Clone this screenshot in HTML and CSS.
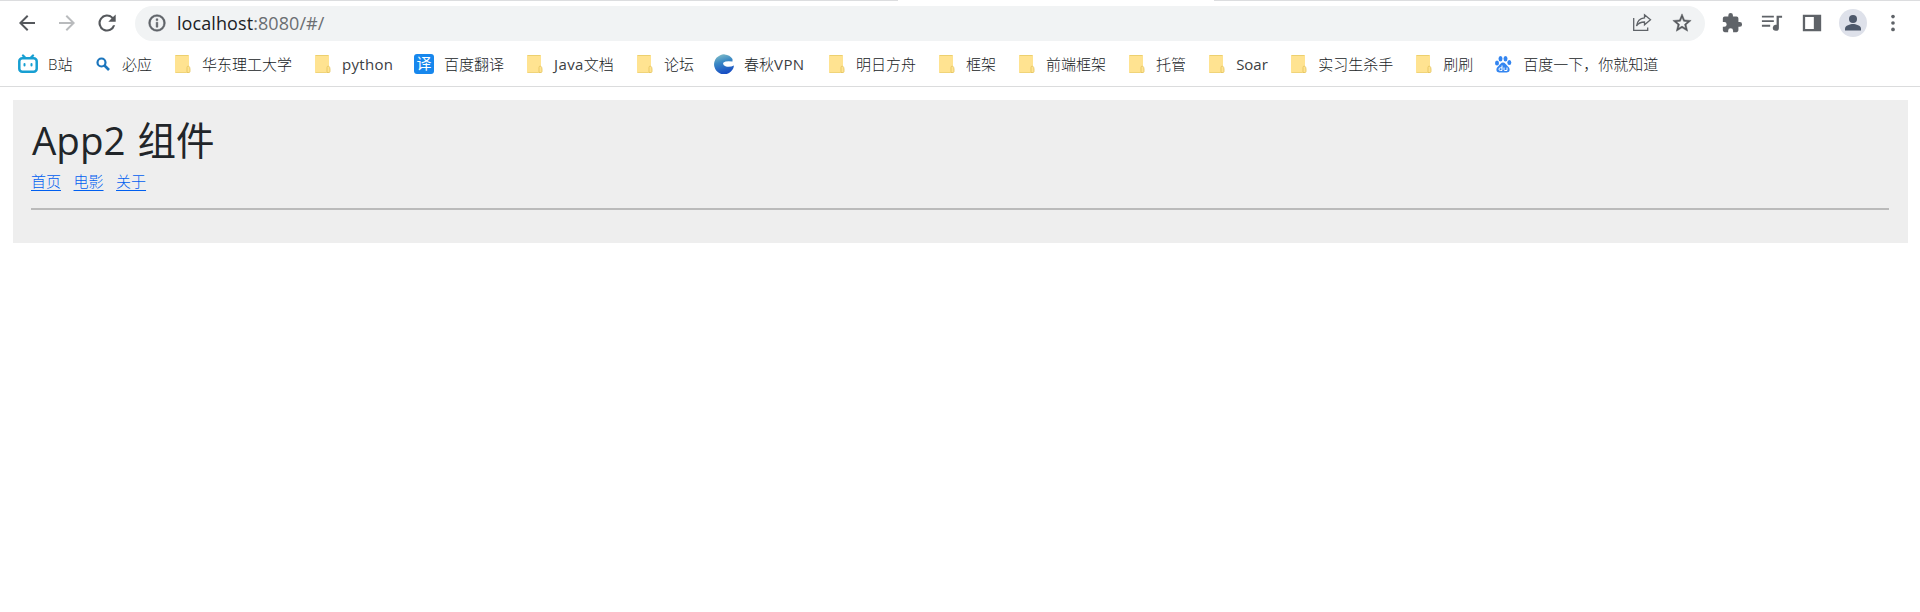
FILE: index.html
```html
<!DOCTYPE html>
<html lang="zh-CN">
<head>
<meta charset="utf-8">
<title>App2</title>
<link rel="stylesheet" href="styles.css">
</head>
<body>
<svg class="defs" width="0" height="0">
  <defs>
    <symbol id="folder" viewBox="0 0 20 20">
      <path d="M4 1h12a1 1 0 0 1 1 1v16a1 1 0 0 1-1 1H4a1 1 0 0 1-1-1V2a1 1 0 0 1 1-1z" fill="#ffe391"/>
      <path d="M3.500 1.500h13" stroke="#ecd06f" fill="none"/>
      <path d="M3.500 18.500h11" stroke="#f0d479" fill="none"/>
      <path d="M15 13.500q0-1.500 1.500-1.500 1.500 1 1.500 3v2.500q0 1-1 1h-2z" fill="#ffe391" stroke="#e3c35c" stroke-width=".8"/>
    </symbol>
  </defs>
</svg>
<div class="browser">
  <header class="toolbar">
    <span class="active-tab"></span>
    <nav class="nav-buttons">
      <svg class="nav-icon" viewBox="0 0 24 24"><path d="M20 11H7.800l5.600-5.600L12 4l-8 8 8 8 1.400-1.400L7.800 13H20z" fill="#55585c"/></svg>
      <svg class="nav-icon" viewBox="0 0 24 24"><path d="M12 4l-1.400 1.400 5.600 5.600H4v2h12.200l-5.600 5.600L12 20l8-8z" fill="#b9bbbd"/></svg>
      <svg class="nav-icon" viewBox="0 0 24 24"><path d="M18 6A8.500 8.500 0 1 0 20.200 14.300h-2.200A6.400 6.400 0 1 1 12 5.600c1.760 0 3.300.7 4.500 1.900L13.300 10.800h7.400V3.400z" fill="#55585c"/></svg>
    </nav>
    <div class="address">
      <svg class="info" viewBox="0 0 24 24"><path d="M11 17h2v-6h-2zm1-15a10 10 0 1 0 0 20 10 10 0 0 0 0-20zm0 18a8 8 0 1 1 0-16 8 8 0 0 1 0 16zM11 9h2V7h-2z" fill="#5f6368" stroke="#5f6368" stroke-width=".6"/></svg>
      <span class="url"><b>localhost</b>:8080/#/</span>
      <svg class="share" viewBox="0 0 20 20" fill="none" stroke="#5f6368" stroke-width="1.300"><path d="M1.700 5v12.300h14V14.500"/><path d="M12.500 1.800l6 5-6 5V9Q7 9 4.500 13 5.500 5.500 12.500 4.800z"/></svg>
      <svg class="star" viewBox="0 0 24 24"><path d="M22 9.240l-7.190-.62L12 2 9.190 8.630 2 9.240l5.460 4.730L5.820 21 12 17.270 18.180 21l-1.630-7.030zM12 15.400l-3.760 2.270 1-4.280-3.320-2.880 4.380-.38L12 6.100l1.710 4.040 4.380.38-3.320 2.880 1 4.280z" fill="#55585c" stroke="#55585c" stroke-width=".5"/></svg>
    </div>
    <div class="actions">
      <svg viewBox="0 0 24 24"><path d="M20.500 11H19V7a2 2 0 0 0-2-2h-4V3.500a2.500 2.500 0 0 0-5 0V5H4a2 2 0 0 0-2 2v3.800h1.500a2.700 2.700 0 0 1 0 5.400H2V20a2 2 0 0 0 2 2h3.800v-1.500a2.700 2.700 0 0 1 5.400 0V22H17a2 2 0 0 0 2-2v-4h1.500a2.500 2.500 0 0 0 0-5z" fill="#5f6368"/></svg>
      <svg viewBox="0 0 24 24"><path d="M1 4h13v2H1zm0 5h13v2H1zm0 5h9v2H1zM17 4h6v2.300h-3.500V17a3.300 3.300 0 1 1-2.500-3z" fill="#5f6368"/></svg>
      <svg viewBox="0 0 24 24"><path d="M2 3h20v18H2zM4.500 5.500v13H14v-13z" fill="#5f6368" fill-rule="evenodd"/></svg>
      <svg class="avatar" viewBox="0 0 28 28"><circle cx="14" cy="14" r="14" fill="#dee1ea"/><circle cx="14" cy="10" r="4" fill="#4d586b"/><path d="M6 21.500v-2c0-3 5.300-4.500 8-4.500s8 1.500 8 4.500v2z" fill="#4d586b"/></svg>
      <svg viewBox="0 0 24 24" fill="#5f6368"><circle cx="12" cy="5" r="2"/><circle cx="12" cy="12" r="2"/><circle cx="12" cy="19" r="2"/></svg>
    </div>
  </header>
  <div class="bookmarks">
    <a class="bookmark"><svg viewBox="0 0 20 20" fill="none" stroke="#179fd2" stroke-linecap="round"><rect x="1.300" y="4.300" width="17.400" height="13.400" rx="3" stroke-width="2.500"/><path d="M5 1.500l2 2M15 1.500l-2 2" stroke-width="2.300"/><path d="M6.500 10v1.500M13.500 10v1.500" stroke-width="2"/></svg><span class="w-b">B站</span></a>
    <a class="bookmark"><svg viewBox="0 0 20 20" fill="none" stroke="#1b75bd"><circle cx="9.500" cy="8.500" r="4" stroke-width="2.200"/><path d="M12.500 11.500l4.500 4.500" stroke-width="2.700"/></svg><span>必应</span></a>
    <a class="bookmark"><svg><use href="#folder"/></svg><span>华东理工大学</span></a>
    <a class="bookmark"><svg><use href="#folder"/></svg><span class="w-python">python</span></a>
    <a class="bookmark"><i class="translate">译</i><span>百度翻译</span></a>
    <a class="bookmark"><svg><use href="#folder"/></svg><span class="w-java"><b>Java</b>文档</span></a>
    <a class="bookmark"><svg><use href="#folder"/></svg><span>论坛</span></a>
    <a class="bookmark"><svg viewBox="0 0 20 20"><defs><linearGradient id="swirl" x1="0" y1="0" x2=".3" y2="1"><stop offset="0" stop-color="#8cc5c8"/><stop offset=".45" stop-color="#3c8ac4"/><stop offset="1" stop-color="#1950c4"/></linearGradient></defs><path d="M18.500 5A10 10 0 1 0 20 11.500Q16 13.500 12 12.500 8 11 9.500 8.500 12 6.500 18.500 7.500z" fill="url(#swirl)"/></svg><span class="w-vpn">春秋<b>VPN</b></span></a>
    <a class="bookmark"><svg><use href="#folder"/></svg><span>明日方舟</span></a>
    <a class="bookmark"><svg><use href="#folder"/></svg><span>框架</span></a>
    <a class="bookmark"><svg><use href="#folder"/></svg><span>前端框架</span></a>
    <a class="bookmark"><svg><use href="#folder"/></svg><span>托管</span></a>
    <a class="bookmark"><svg><use href="#folder"/></svg><span class="w-soar">Soar</span></a>
    <a class="bookmark"><svg><use href="#folder"/></svg><span>实习生杀手</span></a>
    <a class="bookmark"><svg><use href="#folder"/></svg><span>刷刷</span></a>
    <a class="bookmark"><svg viewBox="0 0 20 20" fill="#3385f0"><ellipse cx="4" cy="9" rx="2" ry="2.500"/><ellipse cx="7.500" cy="4.700" rx="2" ry="2.700"/><ellipse cx="12.500" cy="4.700" rx="2" ry="2.700"/><ellipse cx="16.300" cy="8.500" rx="2" ry="2.500"/><path d="M10 8.500c2 0 3 2 4.500 3.500s2.500 2.500 2 4.500-2.500 2-6.500 2-6 0-6.500-2 .5-3 2-4.500S8 8.500 10 8.500z"/><path d="M9 11.500v5H7.300q-1.300 0-1.300-1.300t1.300-1.400H9M11 13.500v2.200q0 .8 1 .8h2v-3" fill="none" stroke="#fff"/></svg><span>百度一下，你就知道</span></a>
  </div>
</div>
<main class="app">
  <h1>App2 组件</h1>
  <nav class="links"><a href="#/">首页</a><a href="#/movie">电影</a><a href="#/about">关于</a></nav>
  <hr>
</main>
</body>
</html>
```
FILE: styles.css
```css
* { box-sizing: border-box; }
body { margin: 0; background: #fff; font-family: "Open Sans", "Noto Sans CJK SC", sans-serif; }
.defs { position: absolute; }
svg { display: block; flex: none; }
.browser { height: 87px; border-top: 1px solid #dcdddf; border-bottom: 1px solid #dbdcdd; }
.toolbar { position: relative; display: flex; align-items: center; height: 45px; padding: 0 16px 0 15px; }
.active-tab { position: absolute; left: 898px; top: -1px; width: 316px; height: 1px; background: #fff; }
.nav-buttons { display: flex; flex: none; gap: 16px; width: 120px; padding-bottom: 1px; }
.nav-icon { width: 24px; height: 24px; }
.address { display: flex; align-items: center; flex: none; width: 1570px; height: 35px; padding: 0 12px 1px; border-radius: 18px; background: #f1f3f4; }
.info { width: 20px; height: 20px; }
.url { flex: 1; margin-left: 10px; padding-bottom: 1px; color: #6b6e72; font-size: 18px; line-height: 30px; letter-spacing: 0.08px; }
.url b { color: #202124; font-weight: 400; }
.share { width: 20px; height: 20px; margin-right: 19px; }
.star { width: 22px; height: 22px; }
.actions { display: flex; align-items: center; flex: none; gap: 18px; margin-left: 16px; padding-bottom: 1px; }
.actions svg { width: 22px; height: 22px; }
.actions .avatar { width: 28px; height: 28px; margin: 0 -2px; }
.actions svg:last-child { margin-left: -1px; }
.bookmarks { display: flex; align-items: center; gap: 20px; height: 37px; padding: 0 0 1px 18px; color: #202326; font-size: 15px; font-weight: 300; line-height: 20px; white-space: nowrap; }
.bookmark { display: flex; align-items: center; gap: 10px; }
.bookmark span { margin-top: -1px; }
.bookmark b { font-weight: 400; color: #3c4043; letter-spacing: 0.4px; }
.bookmark svg { width: 20px; height: 20px; }
.translate { width: 20px; height: 20px; border-radius: 3px; background: #1787ed; color: #fff; font-size: 15px; line-height: 19px; font-style: normal; font-weight: 400; text-align: center; }
.w-b { width: 24px; }
.w-python { width: 52px; font-weight: 400; color: #3c4043; letter-spacing: 0.3px; }
.w-java { width: 60px; }
.w-vpn { width: 62px; }
.w-soar { width: 32px; font-weight: 400; color: #3c4043; }
.app { height: 143px; margin: 13px 12px 0 13px; padding: 16px 19px 0 18px; background: #eee; color: #212529; }
h1 { margin: 0 0 6px 1px; font-size: 38.5px; font-weight: 400; line-height: 48px; word-spacing: 2px; }
.links { display: flex; gap: 12.5px; font-size: 15px; font-weight: 300; line-height: 22px; }
.links a { color: #005ff0; text-underline-offset: 3px; text-decoration-skip-ink: none; }
hr { height: 2px; margin: 16px 0 0; border: 0; background: #bababa; }
```
